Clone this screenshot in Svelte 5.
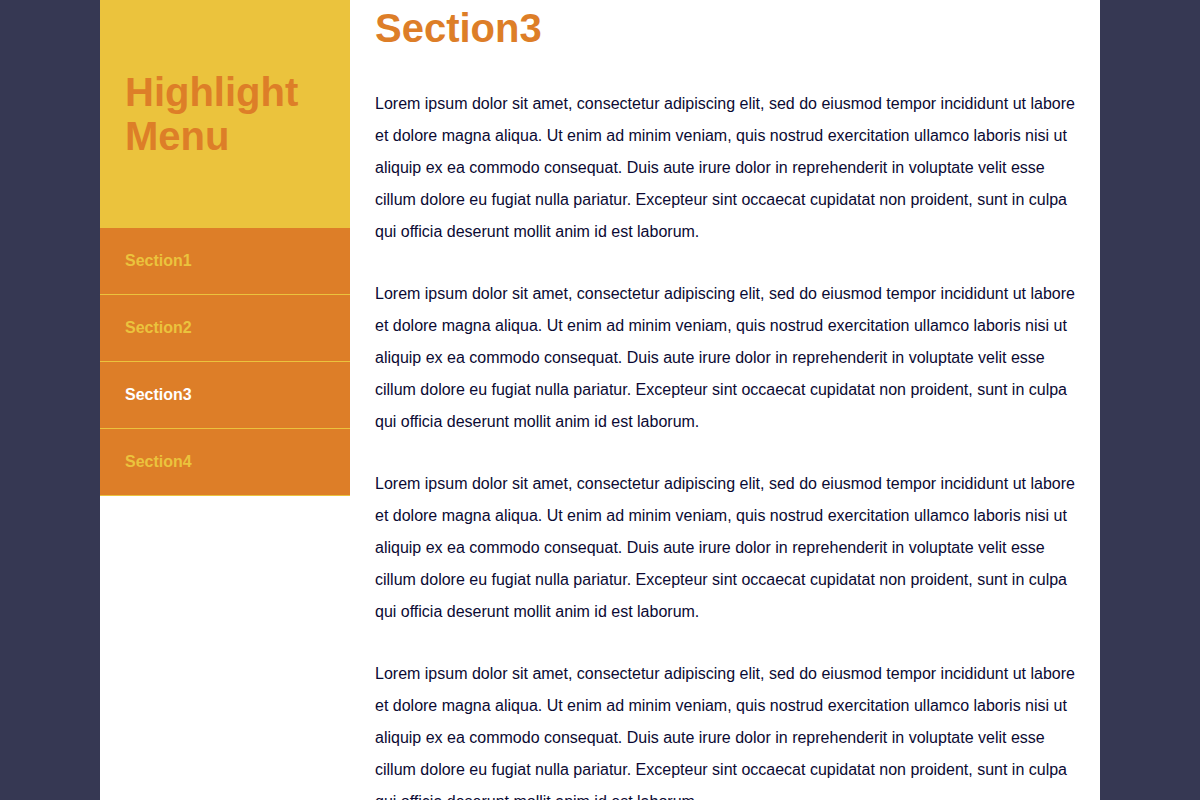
<script>
  const sections = ['Section1', 'Section2', 'Section3', 'Section4'];
  const current = 'Section3';
  const paragraphs = Array(4).fill(
    'Lorem ipsum dolor sit amet, consectetur adipiscing elit, sed do eiusmod tempor incididunt ut labore et dolore magna aliqua. Ut enim ad minim veniam, quis nostrud exercitation ullamco laboris nisi ut aliquip ex ea commodo consequat. Duis aute irure dolor in reprehenderit in voluptate velit esse cillum dolore eu fugiat nulla pariatur. Excepteur sint occaecat cupidatat non proident, sunt in culpa qui officia deserunt mollit anim id est laborum.'
  );
</script>

<div class="page">
  <aside>
    <header><h1>Highlight Menu</h1></header>
    <nav>
      {#each sections as name}
        <a href="#{name}" class:active={name === current}>{name}</a>
      {/each}
    </nav>
  </aside>
  <main>
    <section id={current}>
      <h2>{current}</h2>
      {#each paragraphs as text}
        <p>{text}</p>
      {/each}
    </section>
  </main>
</div>

<style>
  :global(body) {
    background: #363853;
    color: #0b0a33;
    font-family: "Liberation Sans", Helvetica, Arial, sans-serif;
    font-size: 16px;
  }
  .page {
    display: flex;
    align-items: flex-start;
    max-width: 1000px;
    height: 100vh;
    margin: 0 auto;
    background: #fff;
  }
  aside {
    flex: 0 0 25%;
  }
  header {
    padding: 70px 25px;
    background: #ebc33d;
  }
  h1, h2 {
    margin: 0;
    color: #dd7e28;
    font-size: 40px;
    line-height: 44px;
  }
  a {
    display: block;
    padding: 25px;
    border-bottom: 1px solid #ebc33d;
    background: #dd7e28;
    color: #ebc33d;
    font-weight: bold;
    line-height: 16px;
    text-decoration: none;
  }
  a.active {
    color: #fff;
  }
  main {
    box-sizing: border-box;
    flex: 1;
    min-width: 0;
    height: 100%;
    padding: 6px 25px;
    overflow-y: auto;
    scrollbar-width: none;
  }
  h2 {
    margin-bottom: 38px;
  }
  p {
    margin: 0 0 30px;
    line-height: 32px;
  }
</style>
